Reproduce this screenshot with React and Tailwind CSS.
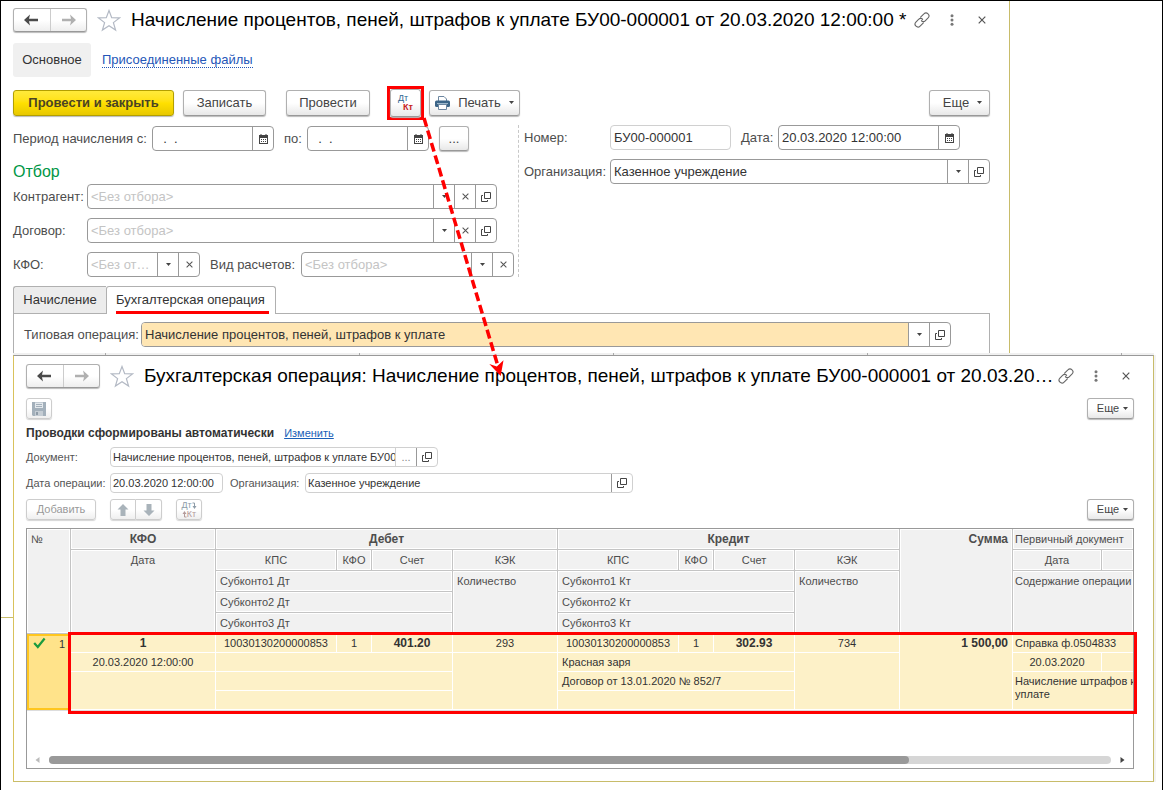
import React from "react";

// Icons
const ArrowIcon = ({ flip }) => (
  <svg width="15" height="12" viewBox="0 0 15 12">
    <path
      d={
        flip
          ? "M15 6 L9 0.5 L10 4.8 H1 V7.2 H10 L9 11.5 Z"
          : "M0 6 L6 0.5 L5 4.8 H14 V7.2 H5 L6 11.5 Z"
      }
      fill="currentColor"
    />
  </svg>
);

const StarIcon = () => (
  <svg width="24" height="23" viewBox="0 0 24 23" className="shrink-0">
    <path
      d="M12 1.5 L14.7 8.6 L22.5 8.9 L16.4 13.6 L18.6 21 L12 16.7 L5.4 21 L7.6 13.6 L1.5 8.9 L9.3 8.6 Z"
      fill="none"
      stroke="#b3b9c4"
      strokeWidth="1.2"
    />
  </svg>
);

const LinkIcon = () => (
  <svg
    width="16"
    height="16"
    viewBox="0 0 16 16"
    fill="none"
    stroke="#666"
    strokeWidth="1.1"
    strokeLinecap="round"
  >
    <path d="M6.6 5.2 L9.9 1.9 A2.6 2.6 0 0 1 14.1 5.9 L11.2 8.8 A2.4 2.4 0 0 1 7.4 8.6" />
    <path d="M9.4 10.8 L6.1 14.1 A2.6 2.6 0 0 1 1.9 10.1 L4.8 7.2 A2.4 2.4 0 0 1 8.6 7.4" />
  </svg>
);

const DotsIcon = () => (
  <svg width="4" height="12" viewBox="0 0 4 12" fill="#777">
    <circle cx="2" cy="1.8" r="1.5" />
    <circle cx="2" cy="6" r="1.5" />
    <circle cx="2" cy="10.2" r="1.5" />
  </svg>
);

const CrossIcon = ({ className }) => (
  <svg viewBox="0 0 8 8" className={className}>
    <path d="M0.7 0.7 L7.3 7.3 M7.3 0.7 L0.7 7.3" stroke="#555" strokeWidth="1.2" />
  </svg>
);

const CaretIcon = () => (
  <svg width="5" height="3" viewBox="0 0 5 3" className="shrink-0">
    <path d="M0 0 H5 L2.5 3 Z" fill="#444" />
  </svg>
);

const OpenIcon = () => (
  <svg width="10" height="10" viewBox="0 0 10 10" fill="none" stroke="#444">
    <path d="M3.5 0.5 H9.5 V6.5 H3.5 Z" />
    <path d="M2 3.5 H0.5 V9.5 H6.5 V8" />
  </svg>
);

const CalendarIcon = () => (
  <svg width="9" height="10" viewBox="0 0 9 10">
    <path d="M0 1 H9 V10 H0 Z" fill="#444" />
    <path d="M1 4 H8 V9 H1 Z" fill="#fff" />
    <path d="M2 0 V2 M7 0 V2" stroke="#444" />
    <path d="M2 5.5 H7 M2 7.5 H7" stroke="#444" strokeDasharray="1 1" />
  </svg>
);

const PrinterIcon = () => (
  <svg width="15" height="14" viewBox="0 0 15 14">
    <path d="M3.5 5 V0.5 H9 L11.5 3 V5" fill="#fff" stroke="#6c86a0" />
    <rect x="0" y="4.5" width="15" height="6.5" rx="1.5" fill="#3b6588" />
    <path d="M2 7.5 H13" stroke="#9db8cc" />
    <path d="M3.5 8.5 H11.5 V13.5 H3.5 Z" fill="#fff" stroke="#6c86a0" />
  </svg>
);

const FloppyIcon = () => (
  <svg width="14" height="14" viewBox="0 0 14 14">
    <path d="M0 0 H14 V14 H1 L0 13 Z" fill="#a3b0bb" />
    <path d="M3 0.5 H11 V6 H3 Z" fill="#e3e8ec" />
    <path d="M4 2.5 H10 M4 4.5 H10" stroke="#a3b0bb" />
    <path d="M3 9 H11 V14 H3 Z" fill="#c5cdd4" />
    <path d="M4 10 H6 V13 H4 Z" fill="#8f9ca8" />
  </svg>
);

const MoveIcon = ({ down }) => (
  <svg width="12" height="12" viewBox="0 0 12 12">
    <path
      d={down ? "M6 12 L0.5 6.5 H3.5 V0 H8.5 V6.5 H11.5 Z" : "M6 0 L0.5 5.5 H3.5 V12 H8.5 V5.5 H11.5 Z"}
      fill="#a9b3ba"
    />
  </svg>
);

const TurnIcon = ({ up }) => (
  <svg width="5" height="7" viewBox="0 0 5 7">
    <path
      d={up ? "M4.5 6 H2.5 V2" : "M0.5 1 H2.5 V5"}
      fill="none"
      stroke="currentColor"
    />
    <path d={up ? "M0.5 3 L2.5 0 L4.5 3 Z" : "M0.5 4 L2.5 7 L4.5 4 Z"} fill="currentColor" />
  </svg>
);

const CheckIcon = () => (
  <svg width="13" height="12" viewBox="0 0 13 12" className="mt-px">
    <path d="M1.2 6 L4.8 10 L11.6 1.5" fill="none" stroke="#1b9b3e" strokeWidth="2.2" />
  </svg>
);

// Shared controls
const buttonLook =
  "flex items-center justify-center rounded-[3px] border border-[#b0b0b0] border-b-[#999] bg-gradient-to-b from-white from-50% to-[#e8e8e8] text-[#444] shadow-[0_1px_1px_#bbb]";
const mutedLook =
  "flex items-center justify-center rounded-[3px] border border-[#cdcdcd] bg-gradient-to-b from-white from-50% to-[#efefef] text-[#999] shadow-[0_1px_1px_#d5d5d5]";

const fieldIcons = {
  caret: { label: "Выбрать из списка", node: <CaretIcon /> },
  clear: { label: "Очистить", node: <CrossIcon className="h-[7px] w-[7px]" /> },
  open: { label: "Открыть", node: <OpenIcon /> },
  calendar: { label: "Календарь", node: <CalendarIcon /> },
  more: { label: "Выбрать", node: <span className="text-[#888]">...</span> },
};

const Field = ({ id, value, placeholder, icons = [], width, small, pale, fill }) => (
  <div
    className={`flex items-stretch overflow-hidden rounded-[4px] border bg-white ${
      small ? "h-5 text-[11px]" : "h-[25px] text-[13px]"
    } ${pale ? "border-[#d0d0d0]" : "border-[#999]"} ${width}`}
  >
    <input
      id={id}
      type="text"
      defaultValue={value}
      placeholder={placeholder}
      className={`min-w-0 flex-1 text-[#333] outline-none placeholder:text-[#c4c4c4] ${
        small ? "pl-[2px]" : "pr-1 pl-[3px] text-ellipsis"
      } ${fill ? "bg-[#ffe6b3]" : "bg-transparent"}`}
    />
    {icons.map((name) => (
      <button
        key={name}
        type="button"
        aria-label={fieldIcons[name].label}
        className={`flex w-[21px] shrink-0 items-center justify-center border-l ${
          name === "more" ? "border-[#d0d0d0]" : "border-[#999]"
        }`}
      >
        {fieldIcons[name].node}
      </button>
    ))}
  </div>
);

const TitleBar = ({ title }) => (
  <div className="flex h-6 items-center">
    <div className="flex h-6 w-[74px] shrink-0 overflow-hidden rounded-[3px] border border-[#b0b0b0] border-b-[#999] bg-gradient-to-b from-white from-50% to-[#eee] shadow-[0_1px_1px_#bbb]">
      <button
        type="button"
        aria-label="Назад"
        className="flex flex-1 items-center justify-center border-r border-[#ccc] text-[#4a4a4a]"
      >
        <ArrowIcon />
      </button>
      <button
        type="button"
        aria-label="Вперед"
        className="flex flex-1 items-center justify-center text-[#b0b0b0]"
      >
        <ArrowIcon flip />
      </button>
    </div>
    <button type="button" aria-label="В избранное" className="ml-[10px]">
      <StarIcon />
    </button>
    <h1 className="ml-[10px] min-w-0 flex-1 truncate text-[19px] leading-6 text-black">
      {title}
    </h1>
    <div className="-mr-1 flex h-4">
      <button type="button" aria-label="Ссылка" className="flex w-6 items-center justify-center">
        <LinkIcon />
      </button>
      <button type="button" aria-label="Меню" className="flex w-9 items-center justify-center">
        <DotsIcon />
      </button>
      <button type="button" aria-label="Закрыть" className="flex w-6 items-center justify-center">
        <CrossIcon className="h-2 w-2" />
      </button>
    </div>
  </div>
);

const MoreButton = () => (
  <button type="button" className={`ml-auto h-[21px] w-[47px] gap-1 pl-1 text-[11px] ${buttonLook}`}>
    Еще <CaretIcon />
  </button>
);

const DocumentWindow = () => (
  <section className="mr-[152px] border-r border-[#c8bc6a] pt-[7px] pr-[19px] pl-3 text-[13px] text-[#4d4d4d]">
    <TitleBar title="Начисление процентов, пеней, штрафов к уплате БУ00-000001 от 20.03.2020 12:00:00 *" />

    <nav className="mt-[11px] flex h-[34px] items-center gap-[11px]">
      <span className="flex h-full w-[78px] items-center justify-center rounded-[3px] bg-[#f0f0f0] text-[#333]">
        Основное
      </span>
      <a href="#files" className="border-b border-dotted border-[#2456b8] leading-[14px] text-[#2456b8]">
        Присоединенные файлы
      </a>
    </nav>

    {/* Command bar */}
    <div className="mt-3 flex h-[27px] items-center">
      <button
        type="button"
        className="flex h-[26px] w-[161px] items-center justify-center rounded-[3px] border border-[#b39f00] bg-gradient-to-b from-[#ffea3a] via-[#ffe000] to-[#e8c800] font-bold text-[#4a4324] shadow-[0_1px_1px_#bbb]"
      >
        Провести и закрыть
      </button>
      <button type="button" className={`ml-[9px] h-[26px] w-[83px] ${buttonLook}`}>
        Записать
      </button>
      <button type="button" className={`ml-5 h-[26px] w-[84px] ${buttonLook}`}>
        Провести
      </button>
      <div className="-my-1 ml-[17px] border-3 border-[#f00]">
        <button
          type="button"
          className={`h-[28px] w-[31px] flex-col text-[9px] leading-[9px] ${buttonLook}`}
        >
          <span className="mr-[5px] text-[#2f6690]">Дт</span>
          <span className="ml-[5px] font-bold text-[#c8201c]">Кт</span>
        </button>
      </div>
      <button type="button" className={`ml-[5px] h-[26px] w-[91px] gap-2 ${buttonLook}`}>
        <PrinterIcon />
        Печать
        <CaretIcon />
      </button>
      <button type="button" className={`ml-auto h-[26px] w-[61px] gap-2 pl-[6px] ${buttonLook}`}>
        Еще <CaretIcon />
      </button>
    </div>

    <div className="mt-[9px] flex">
      <div className="flex w-[506px] shrink-0 flex-col border-r border-dashed border-[#c8c8c8] pt-px">
        <div className="flex items-center">
          <label htmlFor="from" className="w-[139px]">
            Период начисления с:
          </label>
          <Field id="from" value="  .  ." icons={["calendar"]} width="w-[122px]" />
          <label htmlFor="to" className="ml-[10px] w-[23px]">
            по:
          </label>
          <Field id="to" value="  .  ." icons={["calendar"]} width="w-[122px]" />
          <button type="button" className={`ml-[10px] h-[25px] w-[30px] ${buttonLook}`}>
            ...
          </button>
        </div>
        <h2 className="pt-[9px] text-[16px] leading-6 text-[#009646]">Отбор</h2>
        <div className="flex flex-col gap-[9px]">
          <div className="flex items-center">
            <label htmlFor="partner" className="w-[74px]">
              Контрагент:
            </label>
            <Field id="partner" placeholder="<Без отбора>" icons={["caret", "clear", "open"]} width="w-[410px]" />
          </div>
          <div className="flex items-center">
            <label htmlFor="contract" className="w-[74px]">
              Договор:
            </label>
            <Field id="contract" placeholder="<Без отбора>" icons={["caret", "clear", "open"]} width="w-[410px]" />
          </div>
          <div className="flex items-center">
            <label htmlFor="kfo" className="w-[74px]">
              КФО:
            </label>
            <Field id="kfo" placeholder="<Без отбора>" icons={["caret", "clear"]} width="w-[113px]" />
            <label htmlFor="kind" className="ml-[10px] w-[91px] whitespace-nowrap">
              Вид расчетов:
            </label>
            <Field id="kind" placeholder="<Без отбора>" icons={["caret", "clear"]} width="w-[213px]" />
          </div>
        </div>
      </div>

      <div className="flex min-w-0 flex-1 flex-col gap-[9px] pl-[5px]">
        <div className="flex items-center">
          <label htmlFor="number" className="w-[86px] shrink-0">
            Номер:
          </label>
          <Field id="number" value="БУ00-000001" pale width="w-[121px]" />
          <label htmlFor="date" className="ml-[10px] w-[37px]">
            Дата:
          </label>
          <Field id="date" value="20.03.2020 12:00:00" icons={["calendar"]} width="w-[182px]" />
        </div>
        <div className="flex items-center">
          <label htmlFor="org" className="w-[86px] shrink-0">
            Организация:
          </label>
          <Field id="org" value="Казенное учреждение" icons={["caret", "open"]} width="flex-1" />
        </div>
      </div>
    </div>

    {/* Tabs */}
    <div role="tablist" className="mt-[9px] flex h-7 text-[#333]">
      <button
        type="button"
        role="tab"
        aria-selected="false"
        className="w-[93px] rounded-tl-[3px] border border-r-0 border-[#b0b0b0] bg-[#ececec]"
      >
        Начисление
      </button>
      <button
        type="button"
        role="tab"
        aria-selected="true"
        className="flex w-[170px] items-start rounded-t-[3px] border border-b-0 border-[#b0b0b0] pt-[2px] pl-[9px]"
      >
        <span className="border-b-3 border-[#f00] pr-1 pb-px leading-[21px] whitespace-nowrap">
          Бухгалтерская операция
        </span>
      </button>
      <div className="flex-1 border-b border-[#b0b0b0]" />
    </div>
    <div className="flex h-[39px] items-start border-x border-[#b0b0b0] pt-2 pr-[38px] pl-[10px]">
      <label htmlFor="typical" className="w-[117px] shrink-0 leading-[25px]">
        Типовая операция:
      </label>
      <Field
        id="typical"
        value="Начисление процентов, пеней, штрафов к уплате"
        icons={["caret", "open"]}
        width="flex-1"
        fill
      />
    </div>
  </section>
);

// Postings table
const headCell = "border-b border-[#c4c4c4] bg-[#f1f1f1] align-top shadow-[inset_0_0_0_1px_#fff]";
const th = `${headCell} border-r px-1 font-normal`;
const thBold = `${headCell} border-r px-1 text-[12px] font-bold`;
const thLast = `${headCell} pl-[2px] text-left font-normal`;
const bodyCell = "border-b border-white bg-[#fdf1c8] align-top";
const td = `${bodyCell} border-r px-1`;
const tdLast = `${bodyCell} pl-[2px]`;

const columns = [
  "w-[44px]",
  "w-[145px]",
  "w-[121px]",
  "w-[35px]",
  "w-[81px]",
  "w-[105px]",
  "w-[121px]",
  "w-[35px]",
  "w-[81px]",
  "w-[105px]",
  "w-[113px]",
  "w-[89px]",
  "w-auto",
];

const debit = { kps: "10030130200000853", kfo: "1", account: "401.20", kek: "293" };
const credit = { kps: "10030130200000853", kfo: "1", account: "302.93", kek: "734" };

const AccountHeads = () => (
  <>
    <th className={th}>КПС</th>
    <th className={th}>КФО</th>
    <th className={th}>Счет</th>
    <th className={th}>КЭК</th>
  </>
);

const AccountCells = ({ row }) => (
  <>
    <td className={`${td} text-center`}>{row.kps}</td>
    <td className={`${td} text-center`}>{row.kfo}</td>
    <td className={`${td} text-center text-[12px] font-bold`}>{row.account}</td>
    <td className={`${td} text-center`}>{row.kek}</td>
  </>
);

const PostingsTable = () => (
  <div className="relative mt-2 border border-[#999]">
    <table className="w-full table-fixed border-separate border-spacing-0 overflow-hidden text-[11px] whitespace-nowrap">
      <colgroup>
        {columns.map((c, i) => (
          <col key={i} className={c} />
        ))}
      </colgroup>
      <thead className="leading-5 text-[#4d4d4d]">
        <tr className="h-[21px]">
          <th rowSpan={5} className={`${th} text-left`}>№</th>
          <th className={thBold}>КФО</th>
          <th colSpan={4} className={thBold}>Дебет</th>
          <th colSpan={4} className={thBold}>Кредит</th>
          <th rowSpan={5} className={`${thBold} text-right`}>Сумма</th>
          <th colSpan={2} className={thLast}>Первичный документ</th>
        </tr>
        <tr className="h-[21px]">
          <th rowSpan={4} className={th}>Дата</th>
          <AccountHeads />
          <AccountHeads />
          <th className={th}>Дата</th>
          <th className={thLast} />
        </tr>
        <tr className="h-[21px]">
          <th colSpan={3} className={`${th} text-left`}>Субконто1 Дт</th>
          <th rowSpan={3} className={`${th} text-left`}>Количество</th>
          <th colSpan={3} className={`${th} text-left`}>Субконто1 Кт</th>
          <th rowSpan={3} className={`${th} text-left`}>Количество</th>
          <th colSpan={2} rowSpan={3} className={thLast}>Содержание операции</th>
        </tr>
        <tr className="h-[21px]">
          <th colSpan={3} className={`${th} text-left`}>Субконто2 Дт</th>
          <th colSpan={3} className={`${th} text-left`}>Субконто2 Кт</th>
        </tr>
        <tr className="h-[21px]">
          <th colSpan={3} className={`${th} text-left`}>Субконто3 Дт</th>
          <th colSpan={3} className={`${th} text-left`}>Субконто3 Кт</th>
        </tr>
      </thead>
      <tbody className="leading-[18px] text-[#333]">
        <tr className="h-[19px]">
          <td rowSpan={4} className="border-2 border-[#ffc61e] bg-[#ffe38a] px-1 align-top">
            <div className="flex items-start justify-between leading-4">
              <CheckIcon />
              1
            </div>
          </td>
          <td className={`${td} text-center text-[12px] font-bold`}>1</td>
          <AccountCells row={debit} />
          <AccountCells row={credit} />
          <td rowSpan={4} className={`${td} text-right text-[12px] font-bold`}>1 500,00</td>
          <td colSpan={2} className={tdLast}>Справка ф.0504833</td>
        </tr>
        <tr className="h-[19px]">
          <td className={`${td} text-center`}>20.03.2020 12:00:00</td>
          <td colSpan={3} className={td} />
          <td rowSpan={3} className={td} />
          <td colSpan={3} className={td}>Красная заря</td>
          <td rowSpan={3} className={td} />
          <td className={`${td} text-center`}>20.03.2020</td>
          <td className={tdLast} />
        </tr>
        <tr className="h-[19px]">
          <td rowSpan={2} className={td} />
          <td colSpan={3} className={td} />
          <td colSpan={3} className={td}>Договор от 13.01.2020 № 852/7</td>
          <td colSpan={2} rowSpan={2} className={`${tdLast} pt-[3px] leading-[13px]`}>
            Начисление штрафов к
            <br />
            уплате
          </td>
        </tr>
        <tr className="h-[19px]">
          <td colSpan={3} className={td} />
          <td colSpan={3} className={td} />
        </tr>
      </tbody>
    </table>
    {/* Highlight frame over the posting */}
    <div className="pointer-events-none absolute top-[103px] -right-1 left-[41px] h-[82px] border-3 border-[#f00]" />

    <div className="flex items-center gap-[9px] border-t border-[#ddd] pt-[45px] pr-2 pb-1 pl-2">
      <svg width="5" height="6" viewBox="0 0 5 6">
        <path d="M4.5 0 V6 L0.5 3 Z" fill="#bbb" />
      </svg>
      <div className="h-2 flex-1 rounded-full bg-[#d6d6d6]">
        <div className="h-2 w-[81%] rounded-full bg-[#999]" />
      </div>
      <svg width="5" height="6" viewBox="0 0 5 6">
        <path d="M0.5 0 V6 L4.5 3 Z" fill="#444" />
      </svg>
    </div>
  </div>
);

const OperationWindow = () => (
  <div className="mr-2 ml-3">
    {/* Column edges of the list behind this window */}
    <div className="flex h-[2px] bg-[#f0f0f0] pl-[92px]">
      <div className="w-[254px] border-l border-[#aaa]" />
      <div className="w-[254px] border-l border-[#aaa]" />
      <div className="w-[254px] border-l border-[#aaa]" />
      <div className="w-[254px] border-l border-[#aaa]" />
      <div className="border-l border-[#aaa]" />
    </div>
    <section className="border border-t-[#999] border-r-[#c8bc6a] border-b-[#c8bc6a] border-l-[#d9c25c] bg-white pt-2 pr-[19px] pb-3 pl-3 text-[11px] text-[#555] shadow-[2px_0_0_#f3f3f3]">
      <TitleBar title="Бухгалтерская операция: Начисление процентов, пеней, штрафов к уплате БУ00-000001 от 20.03.2020 12:00:00" />

      <div className="mt-[10px] flex">
        <button type="button" aria-label="Сохранить" className={`h-[21px] w-[26px] ${mutedLook}`}>
          <FloppyIcon />
        </button>
        <MoreButton />
      </div>

      <div className="mt-[6px] flex h-4 items-center gap-[10px]">
        <strong className="text-[12px] text-[#333]">Проводки сформированы автоматически</strong>
        <a href="#edit" className="text-[#1a5fb8] underline">
          Изменить
        </a>
      </div>

      <div className="mt-[6px] flex items-center">
        <label htmlFor="doc" className="w-[84px]">
          Документ:
        </label>
        <Field
          id="doc"
          value="Начисление процентов, пеней, штрафов к уплате БУ00"
          icons={["more", "open"]}
          width="w-[328px]"
          small
          pale
        />
      </div>
      <div className="mt-[6px] flex items-center">
        <label htmlFor="opdate" className="w-[84px] whitespace-nowrap">
          Дата операции:
        </label>
        <Field id="opdate" value="20.03.2020 12:00:00" width="w-[113px]" small pale />
        <label htmlFor="oporg" className="ml-[7px] w-[75px] whitespace-nowrap">
          Организация:
        </label>
        <Field id="oporg" value="Казенное учреждение" icons={["open"]} width="w-[328px]" small pale />
      </div>

      <div className="mt-[6px] flex">
        <button type="button" className={`h-[21px] w-[70px] text-[11px] ${mutedLook}`}>
          Добавить
        </button>
        <div className="ml-[14px] flex">
          <button type="button" aria-label="Вверх" className={`h-[21px] w-[26px] rounded-r-none ${mutedLook}`}>
            <MoveIcon />
          </button>
          <button type="button" aria-label="Вниз" className={`h-[21px] w-[26px] rounded-l-none border-l-0 ${mutedLook}`}>
            <MoveIcon down />
          </button>
        </div>
        <button
          type="button"
          className={`ml-[14px] h-[21px] w-[26px] flex-col text-[9px] leading-[9px] ${mutedLook}`}
        >
          <span className="flex items-center text-[#8d9ca8]">
            Дт
            <TurnIcon />
          </span>
          <span className="flex items-center text-[#b39a9a]">
            <TurnIcon up />
            Кт
          </span>
        </button>
        <MoreButton />
      </div>

      <PostingsTable />
    </section>
  </div>
);

const App = () => (
  <div className="relative min-h-screen overflow-hidden border border-black bg-white pb-2 font-['Liberation_Sans',Arial,sans-serif]">
    <DocumentWindow />
    <OperationWindow />
    <div className="absolute top-[616px] left-0 w-3 border-t border-[#c8bc6a]" />

    {/* Pointer from the Дт/Кт button to the opened window */}
    <svg
      className="pointer-events-none absolute top-[116px] left-[418px]"
      width="90"
      height="264"
      viewBox="419 117 90 264"
    >
      <path d="M424 118 L498.5 368" stroke="#f00" strokeWidth="3.5" strokeDasharray="9 4" />
      <path d="M500.7 376 L489.3 364 L496.8 366.5 L503.5 360.3 Z" fill="#f00" />
    </svg>
  </div>
);

export default App;
